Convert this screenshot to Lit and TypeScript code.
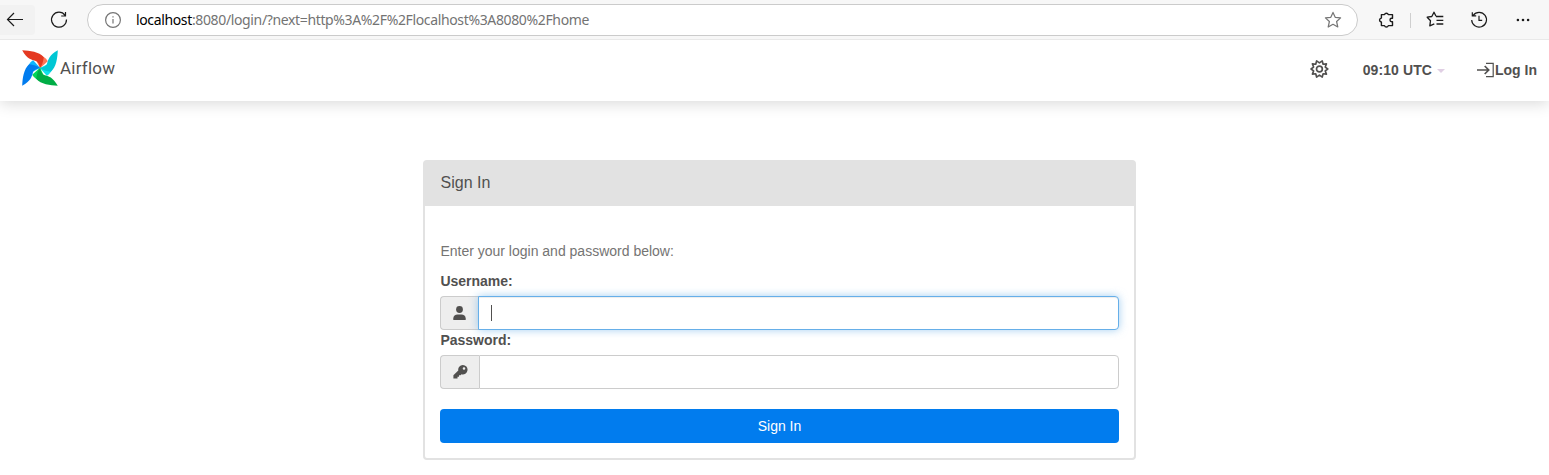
import { LitElement, html, css, svg } from "lit";
import { customElement, property } from "lit/decorators.js";

@customElement("browser-bar")
class BrowserBar extends LitElement {
  static styles = css`
    :host { display: block; }
    .bar {
      box-sizing: border-box; height: 40px; display: flex; align-items: flex-start;
      background: #f7f7f7; border-bottom: 1px solid #e9e9e9;
      font-family: "Noto Sans", sans-serif; color: #111;
    }
    svg { display: block; fill: none; stroke: #1b1b1b; stroke-width: 1.2; flex: none; }
    .back { width: 35px; height: 30px; margin-top: 5px; background: #f2f2f2; border-radius: 0 4px 4px 0; }
    .reload { margin: 10px 18px 0 14px; }
    .address {
      box-sizing: border-box; width: 1271px; height: 32px; margin-top: 4px; padding: 0 15px 0 16px;
      display: flex; align-items: center; background: #fff; border: 1px solid #cbcbcb; border-radius: 16px;
    }
    .address svg { stroke: #757575; }
    .url { flex: 1; margin-left: 14px; font-size: 14px; line-height: 20px; color: #737373; white-space: pre; letter-spacing: -0.36px; }
    .host { color: #000; letter-spacing: -0.36px; }
    .tool { margin-top: 10px; }
    .puzzle { margin-left: 18px; }
    .divider { width: 1px; height: 15px; margin: 13px 15px 0 14px; background: #cfcfcf; }
    .history { margin-left: 24px; }
    .more { margin-left: 24px; fill: #1b1b1b; stroke: none; }
  `;
  render() {
    return html`<div class="bar">
      <svg class="back" width="35" height="30" viewBox="0 0 35 30"><path d="M23 14.5H7.5M14 8L7.5 14.5L14 21" /></svg>
      <svg class="reload" width="20" height="20" viewBox="0 0 20 20"><path d="M16.1 5.3A7.5 7.5 0 1 0 17.5 9.5M16.5 2V6H12.2" /></svg>
      <div class="address">
        <svg width="18" height="18" viewBox="0 0 18 18"><circle cx="9" cy="9" r="7.4" /><path d="M9 8V12.5M9 5.2V6.6" /></svg>
        <span class="url"><span class="host">localhost</span>:8080/login/?next=http%3A%2F%2Flocalhost%3A8080%2Fhome</span>
        <svg width="18" height="18" viewBox="0 0 18 18"><path stroke-linejoin="round" d="M9 1.4L11.2 6.3L16.6 6.9L12.6 10.5L13.8 16L9 13.3L4.2 16L5.4 10.5L1.4 6.9L6.8 6.3Z" /></svg>
      </div>
      <svg class="tool puzzle" width="20" height="20" viewBox="0 0 20 20"><path stroke-linejoin="round" stroke-width="1.4" d="M5.4 4.6H8.5A2 2 0 0 1 12.3 4.6H16.5V8.3H15.7A1.7 1.7 0 0 0 15.7 11.7H16.5V15.6H12.3A2 2 0 0 1 8.5 15.6H5.4V12H5.1A2 2 0 0 1 5.1 8.1H5.4Z" /></svg>
      <div class="divider"></div>
      <svg class="tool" width="20" height="20" viewBox="0 0 20 20"><path stroke-linejoin="round" stroke-width="1.3" d="M10 6.3L8 2.2L5.8 6.5L1.2 7.2L4.5 10.7L3.8 15.8L8.3 13.8M10 6.5H17.3M10.5 10.3H17.3M10.5 14H17.3" /></svg>
      <svg class="tool history" width="20" height="20" viewBox="0 0 20 20"><path d="M3.2 5.3A7.4 7.4 0 1 1 1.7 10M2.3 2.3V5.8H6.2M9 5.8V10.4H12.2" /></svg>
      <svg class="tool more" width="20" height="20" viewBox="0 0 20 20"><circle cx="3.9" cy="10" r="1.3" /><circle cx="9" cy="10" r="1.3" /><circle cx="14.1" cy="10" r="1.3" /></svg>
    </div>`;
  }
}

const blade = (angle: number, main: string, light: string) => svg`
  <g transform="rotate(${angle} 18 18)">
    <path fill=${light} d="M20 6C23 7.6 25 9.6 25.8 11.2L18 18.2L15 12Z" />
    <path fill=${main} d="M.2 .2C8 .6 17 1.6 21.8 7.2C21.2 11.5 20.2 15 18 18.2C17.6 15 16.6 12.2 13.8 11C9.4 9.8 5 8.8 .2 .2Z" />
  </g>`;

@customElement("site-nav")
class SiteNav extends LitElement {
  static styles = css`
    :host { display: block; position: relative; }
    .nav {
      box-sizing: border-box; height: 61px; padding: 0 12px 0 22px; display: flex; align-items: flex-start;
      background: #fff; box-shadow: 0 2px 15px rgba(0, 0, 0, 0.16); clip-path: inset(0 0 -30px 0);
      font-family: "Liberation Sans", Arial, sans-serif; color: #51504f;
    }
    svg { display: block; flex: none; }
    .logo { margin-top: 10px; }
    .name { flex: 1; margin: 16px 0 0 2px; font: 17px/25px Roboto, sans-serif; letter-spacing: 0.22px; }
    .gear { margin: 19px 33px 0 0; }
    .label { font-size: 14px; line-height: 20px; font-weight: 700; margin-top: 20px; white-space: nowrap; }
    .clock { letter-spacing: 0.1px; }
    .caret { margin: 29px 32px 0 5px; border: 4px solid transparent; border-top-color: #e0cfe4; border-bottom: 0; }
    .door { margin-top: 21px; }
  `;
  render() {
    return html`<div class="nav">
      <svg class="logo" width="36" height="36" viewBox="0 0 36 36">
        ${blade(0, "#e43921", "#ff7557")}${blade(90, "#00c7d4", "#11e1ee")}
        ${blade(180, "#00ad46", "#04d659")}${blade(270, "#017cee", "#0cb6ff")}
      </svg>
      <span class="name">Airflow</span>
      <svg class="gear" width="20" height="20" viewBox=".3 -.3 20.6 20.6" fill="none" stroke="#51504f" stroke-width="1.7" stroke-linejoin="round">
        <path d="M7.1 1.7L10 3.7L12.9 1.7L13.8 5.1L17.2 4.7L16 8L18.6 10L16 12L17.2 15.3L13.8 14.9L12.9 18.3L10 16.3L7.1 18.3L6.2 14.9L2.8 15.3L4 12L1.4 10L4 8L2.8 4.7L6.2 5.1Z" /><circle cx="10" cy="10" r="3" />
      </svg>
      <span class="label clock">09:10 UTC</span><span class="caret"></span>
      <svg class="door" width="18" height="18" viewBox="0 0 18 18" fill="none" stroke="#51504f" stroke-width="1.7">
        <path d="M0 9H11.5M7.7 5L11.7 9L7.7 13" /><path stroke-width="1.2" d="M9 2.4H16.2V15.6H9" />
      </svg>
      <span class="label">Log In</span>
    </div>`;
  }
}

@customElement("icon-field")
class IconField extends LitElement {
  @property() label = "";
  @property() icon = "user";
  @property({ type: Boolean }) active = false;
  static styles = css`
    :host { display: block; }
    .label { display: block; height: 20px; margin-bottom: 5px; padding-left: 0.4px; font-size: 14px; line-height: 20px; font-weight: 700; }
    .group { display: flex; height: 34px; }
    .addon {
      box-sizing: border-box; width: 39px; display: grid; place-items: center; background: #eee;
      border: 1px solid #ccc; border-right: 0; border-radius: 4px 0 0 4px;
    }
    .box { box-sizing: border-box; flex: 1; display: flex; align-items: center; background: #fff; border: 1px solid #ccc; border-radius: 0 4px 4px 0; padding-left: 12px; }
    .active {
      margin-left: -1px; border-color: #66afe9; border-radius: 0 4px 4px 0;
      box-shadow: inset 0 1px 1px rgba(0, 0, 0, 0.075), 0 0 8px rgba(102, 175, 233, 0.6);
    }
    .cursor { width: 1px; height: 16px; background: #51504f; }
    svg { display: block; fill: #51504f; }
  `;
  render() {
    const glyph = this.icon === "user"
      ? svg`<circle cx="7.5" cy="4.5" r="3.4" /><path d="M1.3 15V13.6C1.3 10.9 3.3 9.6 5.5 9.6H9.5C11.7 9.6 13.7 10.9 13.7 13.6V15Z" />`
      : svg`<path fill-rule="evenodd" d="M10.8 1A4.7 4.7 0 1 1 9.5 10.2L8.5 11.2H7V12.7H5.5V14.6H1.4V11.3L6.3 6.6A4.7 4.7 0 0 1 10.8 1ZM12 3.2A1.3 1.3 0 1 0 12 5.8A1.3 1.3 0 0 0 12 3.2Z" />`;
    return html`<span class="label">${this.label}</span>
      <div class="group">
        <span class="addon"><svg width="16" height="16" viewBox="0 0 16 16">${glyph}</svg></span>
        <div class="box ${this.active ? "active" : ""}">${this.active ? html`<span class="cursor"></span>` : ""}</div>
      </div>`;
  }
}

@customElement("app-root")
class AppRoot extends LitElement {
  static styles = css`
    :host { display: block; height: 475px; overflow: hidden; background: #fff; font-family: "Liberation Sans", Arial, sans-serif; color: #51504f; }
    .card { box-sizing: border-box; width: 713px; height: 300px; margin: 59px 0 0 423px; border: 2px solid #e2e2e2; border-radius: 4px; }
    .title { height: 44px; box-sizing: border-box; padding: 11px 15px 0 15.5px; background: #e2e2e2; font-size: 16px; line-height: 20px; }
    .body { padding: 35px 15px 0; }
    .hint { font-size: 14px; line-height: 20px; color: #757473; margin-bottom: 10px; padding-left: 0.4px; }
    .submit {
      display: block; width: 100%; height: 34px; margin-top: 20px; border: 0; border-radius: 4px;
      background: #017cee; color: #fff; font: 14px/20px "Liberation Sans", Arial, sans-serif;
    }
  `;
  render() {
    return html`<browser-bar></browser-bar>
      <site-nav></site-nav>
      <div class="card">
        <div class="title">Sign In</div>
        <div class="body">
          <div class="hint">Enter your login and password below:</div>
          <icon-field label="Username:" icon="user" active></icon-field>
          <icon-field label="Password:" icon="key"></icon-field>
          <button class="submit">Sign In</button>
        </div>
      </div>`;
  }
}
